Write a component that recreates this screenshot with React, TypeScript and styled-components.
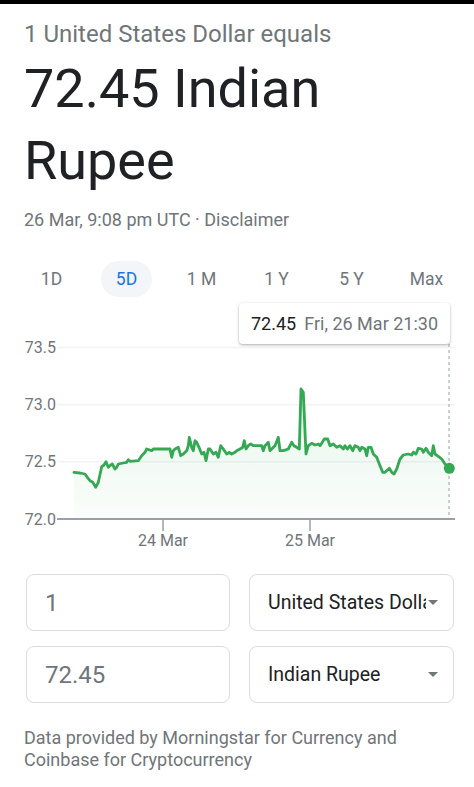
import React from "react";
import styled, { createGlobalStyle } from "styled-components";

const GlobalStyle = createGlobalStyle`
  html, body { margin: 0; padding: 0; background: #fff; }
  body { font-family: Roboto, "Liberation Sans", Arial, sans-serif; -webkit-font-smoothing: antialiased; }
  * { box-sizing: border-box; }
`;

const TopBar = styled.div`
  height: 4px;
  background: #000;
`;

const Page = styled.div`
  padding: 0 20px 0 24px;
`;

const Subtitle = styled.div`
  margin-top: 16px;
  font-size: 24px;
  line-height: 28px;
  color: #70757a;
`;

const BigValue = styled.div`
  margin-top: 5px;
  font-size: 54px;
  line-height: 72px;
  color: #202124;
`;

const DateLine = styled.div`
  margin-top: 12px;
  font-size: 18px;
  line-height: 22px;
  color: #70757a;
`;

const Tabs = styled.div`
  margin: 30px 0 0 -10px;
  width: 450px;
  display: grid;
  grid-template-columns: repeat(6, 1fr);
  justify-items: center;
`;

const Tab = styled.div<{ $active?: boolean }>`
  height: 36px;
  width: 51px;
  border-radius: 18px;
  display: flex;
  align-items: center;
  justify-content: center;
  font-size: 17.5px;
  color: ${(p) => (p.$active ? "#1a73e8" : "#70757a")};
  background: ${(p) => (p.$active ? "#f3f5f8" : "transparent")};
`;

const ChartWrap = styled.div`
  position: relative;
  margin: 0 -20px 0 -24px;
  height: 262px;
`;

const ChartSvg = styled.svg`
  display: block;
  width: 474px;
  height: 262px;
  font-family: Roboto, "Liberation Sans", Arial, sans-serif;
`;

const Tooltip = styled.div`
  position: absolute;
  left: 239px;
  top: 6px;
  width: 211px;
  height: 41px;
  background: #fff;
  border-radius: 4px;
  box-shadow: 0 1px 3px rgba(60, 64, 67, 0.3), 0 1px 2px rgba(60, 64, 67, 0.15);
  display: flex;
  align-items: center;
  padding-left: 12px;
  gap: 8px;
  font-size: 18px;
  white-space: nowrap;
`;

const TipValue = styled.span`
  color: #202124;
`;

const TipDate = styled.span`
  color: #70757a;
`;

const Converter = styled.div`
  margin: 15px 0 0 2px;
  display: grid;
  grid-template-columns: 204px 205px;
  column-gap: 19px;
  row-gap: 15px;
`;

const Box = styled.div`
  height: 57px;
  border: 1px solid #dadce0;
  border-radius: 8px;
  display: flex;
  align-items: center;
  position: relative;
`;

const Amount = styled.div`
  padding-left: 18px;
  font-size: 24px;
  color: #70757a;
`;

const SelectText = styled.div`
  padding-left: 18px;
  width: 176px;
  overflow: hidden;
  white-space: nowrap;
  font-size: 19.5px;
  color: #202124;
`;

const Caret = styled.div`
  position: absolute;
  right: 15px;
  top: 50%;
  margin-top: -3px;
  width: 0;
  height: 0;
  border-left: 5px solid transparent;
  border-right: 5px solid transparent;
  border-top: 5px solid #70757a;
`;

const Footer = styled.div`
  margin-top: 24px;
  font-size: 18px;
  line-height: 22px;
  color: #70757a;
  width: 420px;
`;

// line trace in 3x reference coordinates (x, y) relative to page offset (0, 340)
const RAW: [number, number][] = [
  [222, 400], [240, 402], [255, 405], [262, 415], [270, 425], [278, 430], [287, 445], [295, 430],
  [305, 383], [312, 378], [318, 368], [325, 385], [330, 380], [337, 375], [345, 390], [350, 385],
  [355, 375], [370, 372], [380, 370], [385, 362], [390, 367], [415, 365], [425, 350], [435, 340],
  [440, 330], [455, 335], [460, 330], [510, 330], [515, 355], [520, 335], [525, 330], [535, 325],
  [542, 350], [550, 345], [560, 335], [565, 320], [568, 295], [575, 325], [580, 335], [585, 305],
  [590, 310], [597, 325], [605, 345], [612, 340], [618, 365], [625, 330], [630, 330], [640, 345],
  [648, 340], [655, 355], [662, 320], [670, 330], [680, 345], [688, 340], [695, 345], [705, 340],
  [710, 335], [720, 330], [728, 325], [733, 305], [738, 330], [745, 320], [752, 315], [760, 320],
  [785, 320], [790, 335], [795, 320], [800, 315], [805, 310], [810, 335], [815, 330], [825, 320],
  [835, 295], [840, 335], [850, 335], [865, 330], [875, 310], [882, 320], [890, 325], [898, 330],
  [903, 150], [910, 160], [918, 345], [925, 320], [935, 313], [945, 318], [955, 315], [960, 320],
  [965, 313], [973, 300], [983, 300], [990, 320], [1000, 315], [1010, 325], [1020, 320], [1030, 330],
  [1035, 320], [1042, 330], [1050, 320], [1058, 335], [1065, 320], [1075, 325], [1080, 335], [1085, 325],
  [1095, 330], [1100, 350], [1105, 325], [1113, 325], [1120, 345], [1130, 355], [1140, 380], [1148, 400],
  [1155, 400], [1168, 388], [1175, 400], [1182, 405], [1190, 390], [1200, 360], [1210, 348], [1225, 345],
  [1235, 348], [1240, 340], [1248, 345], [1255, 328], [1265, 330], [1270, 340], [1278, 328], [1285, 340],
  [1295, 350], [1300, 320], [1305, 345], [1315, 352], [1325, 360], [1335, 375], [1348, 388],
];

const CHART_TOP = 298;
const PTS = RAW.map(([x, y]) => [x / 3, y / 3 + 340 - CHART_TOP] as [number, number]);
const LINE = PTS.map(([x, y], i) => `${i ? "L" : "M"}${x.toFixed(1)} ${y.toFixed(1)}`).join(" ");
const BASE_Y = 222;
const AREA = `${LINE} L${PTS[PTS.length - 1][0].toFixed(1)} ${BASE_Y} L${PTS[0][0].toFixed(1)} ${BASE_Y} Z`;

const GRID = [
  { label: "73.5", y: 50.5 },
  { label: "73.0", y: 107.7 },
  { label: "72.5", y: 164.7 },
];

const TICKS = [
  { label: "24 Mar", x: 163 },
  { label: "25 Mar", x: 310 },
];

const TABS = ["1D", "5D", "1 M", "1 Y", "5 Y", "Max"];

function Chart() {
  const last = PTS[PTS.length - 1];
  return (
    <ChartWrap>
      <ChartSvg viewBox="0 0 474 262">
        <defs>
          <linearGradient id="fillGrad" x1="0" y1="0" x2="0" y2="1">
            <stop offset="0" stopColor="#34a853" stopOpacity="0.12" />
            <stop offset="1" stopColor="#34a853" stopOpacity="0.02" />
          </linearGradient>
        </defs>
        {GRID.map((g) => (
          <g key={g.label}>
            <line x1="57" x2="455" y1={g.y} y2={g.y} stroke="#f1f3f4" strokeWidth="1.5" />
            <text x="56" y={g.y + 5.5} textAnchor="end" fontSize="16" fill="#70757a">
              {g.label}
            </text>
          </g>
        ))}
        <path d={AREA} fill="url(#fillGrad)" />
        <line x1="449" x2="449" y1="47" y2={BASE_Y} stroke="#9aa0a6" strokeWidth="1" strokeDasharray="3 3" />
        <path d={LINE} fill="none" stroke="#34a853" strokeWidth="2.8" strokeLinejoin="round" strokeLinecap="round" />
        <circle cx={last[0]} cy={last[1]} r="5.5" fill="#34a853" />
        <line x1="57" x2="455" y1={BASE_Y} y2={BASE_Y} stroke="#9aa0a6" strokeWidth="2" />
        <text x="56" y={BASE_Y + 5.5} textAnchor="end" fontSize="16" fill="#70757a">
          72.0
        </text>
        {TICKS.map((t) => (
          <g key={t.label}>
            <line x1={t.x} x2={t.x} y1={BASE_Y} y2={BASE_Y + 12} stroke="#9aa0a6" strokeWidth="1.5" />
            <text x={t.x} y="249" textAnchor="middle" fontSize="16" fill="#70757a">
              {t.label}
            </text>
          </g>
        ))}
      </ChartSvg>
      <Tooltip>
        <TipValue>72.45</TipValue>
        <TipDate>Fri, 26 Mar 21:30</TipDate>
      </Tooltip>
    </ChartWrap>
  );
}

export default function App() {
  return (
    <>
      <GlobalStyle />
      <TopBar />
      <Page>
        <Subtitle>1 United States Dollar equals</Subtitle>
        <BigValue>
          72.45 Indian
          <br />
          Rupee
        </BigValue>
        <DateLine>26 Mar, 9:08 pm UTC · Disclaimer</DateLine>
        <Tabs>
          {TABS.map((t) => (
            <Tab key={t} $active={t === "5D"}>
              {t}
            </Tab>
          ))}
        </Tabs>
        <Chart />
        <Converter>
          <Box>
            <Amount>1</Amount>
          </Box>
          <Box>
            <SelectText>United States Dollar</SelectText>
            <Caret />
          </Box>
          <Box>
            <Amount>72.45</Amount>
          </Box>
          <Box>
            <SelectText>Indian Rupee</SelectText>
            <Caret />
          </Box>
        </Converter>
        <Footer>
          Data provided by Morningstar for Currency and Coinbase for Cryptocurrency
        </Footer>
      </Page>
    </>
  );
}
